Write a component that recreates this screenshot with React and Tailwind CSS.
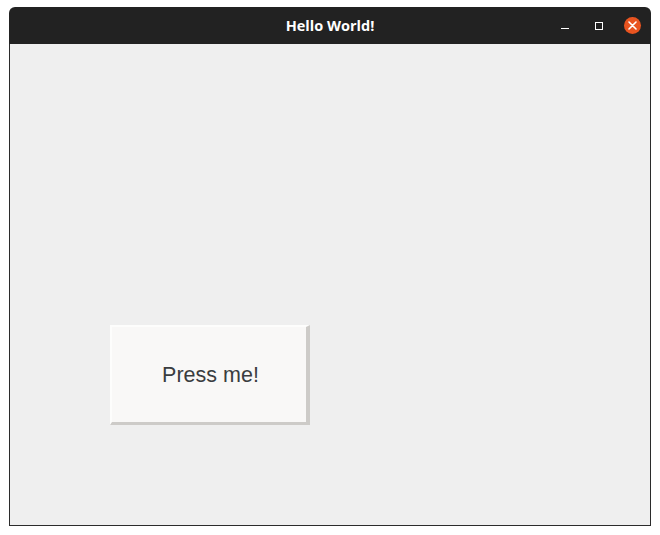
import React from 'react';

const App = () => {
  return (
    <div className="w-[660px] h-[535px] bg-white pt-[7px] pl-[9px]">
      {/* Window */}
      <div className="w-[642px] h-[519px] flex flex-col rounded-t-[6px] overflow-hidden">
        {/* Title bar */}
        <div className="h-[37px] bg-[#222222] relative flex items-center justify-center">
          <span
            className="text-white text-[14.5px] font-bold"
            style={{ fontFamily: '"Open Sans", "DejaVu Sans", sans-serif' }}
          >
            Hello World!
          </span>
          <div className="absolute right-[10px] top-0 h-full flex items-center">
            <div className="w-[8px] h-[1px] bg-white mt-[6px] mr-[26px]" />
            <div className="w-[8px] h-[8px] border border-white mr-[21px]" />
            <div className="w-[17px] h-[17px] rounded-full bg-[#e95420] flex items-center justify-center">
              <svg width="9" height="9" viewBox="0 0 9 9">
                <path d="M1 1 L8 8 M8 1 L1 8" stroke="white" strokeWidth="1.6" strokeLinecap="round" />
              </svg>
            </div>
          </div>
        </div>

        {/* Body */}
        <div className="flex-1 bg-[#efefef] border border-t-0 border-[#2b2b2b] pl-[100px] pt-[281px]">
          <button
            className="w-[200px] h-[100px] bg-[#f9f8f7] border-t-2 border-l-2 border-[#fdfdfc] border-r-[4px] border-b-[3px] border-r-[#cdcbc8] border-b-[#cdcbc8] flex items-center justify-center pt-[2px] pl-[3px] text-[#3a3d40] text-[21.5px]"
            style={{ fontFamily: '"Liberation Sans", Arial, sans-serif' }}
          >
            Press me!
          </button>
        </div>
      </div>
    </div>
  );
};

export default App;
